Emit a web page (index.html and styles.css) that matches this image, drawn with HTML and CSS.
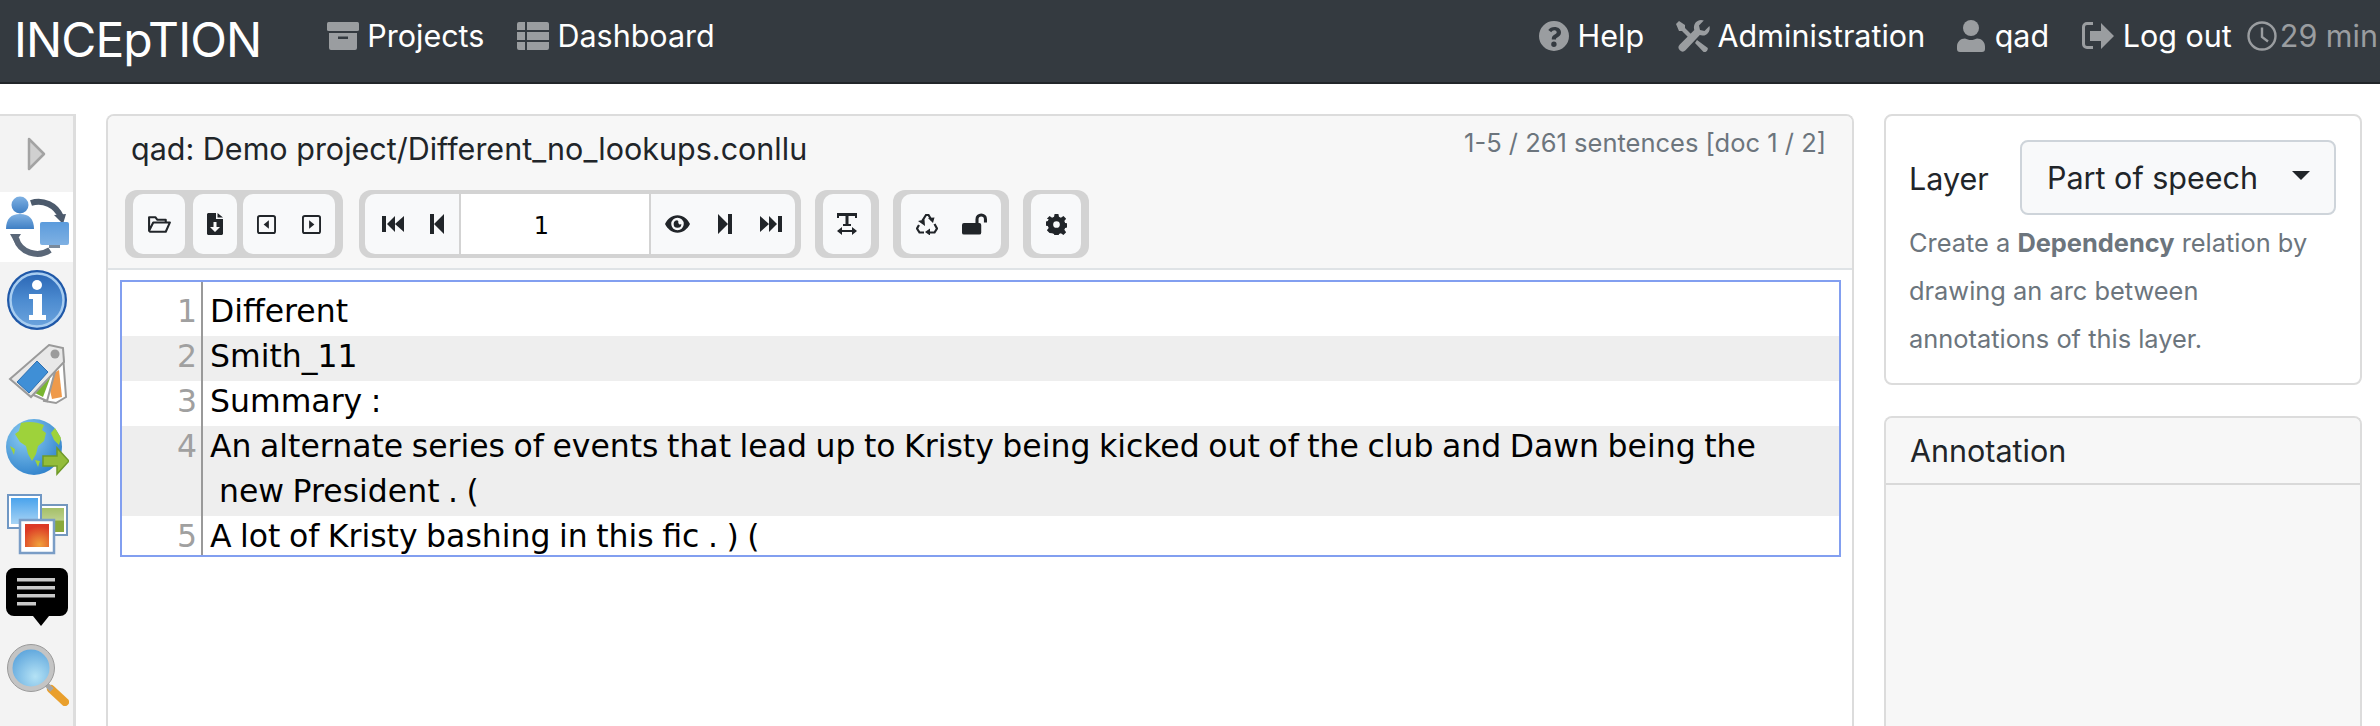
FILE: index.html
```html
<!DOCTYPE html>
<html lang="en">
<head>
<meta charset="utf-8">
<title>INCEpTION</title>
<link rel="stylesheet" href="styles.css">
</head>
<body>
<header class="navbar">
  <a class="brand">INCEpTION</a>
  <nav class="nav nav-left">
    <a class="nav-link"><svg class="nav-icon" viewBox="0 0 32 32"><rect x="0" y="2" width="32" height="9" rx="1.5"/><path d="M2 13h28v15a2 2 0 0 1-2 2H4a2 2 0 0 1-2-2zM11 16.500v2.500h10v-2.500z" fill-rule="evenodd"/></svg>Projects</a>
    <a class="nav-link"><svg class="nav-icon" viewBox="0 0 32 32"><path d="M0 4a2 2 0 0 1 2-2h6v8H0zM10 2h20a2 2 0 0 1 2 2v6H10zM0 12h8v8H0zM10 12h22v8H10zM0 22h8v8H2a2 2 0 0 1-2-2zM10 22h22v6a2 2 0 0 1-2 2H10z"/></svg>Dashboard</a>
  </nav>
  <nav class="nav nav-right">
    <a class="nav-link"><svg class="nav-icon" viewBox="0 0 32 32"><path fill-rule="evenodd" d="M16 1a15 15 0 1 0 0 30 15 15 0 0 0 0-30zM16.500 7c3.700 0 6.500 2.200 6.500 5.500 0 2.700-1.800 3.800-3.300 4.700-1 .6-1.700 1-1.700 1.800v.5h-4.200v-.9c0-2.300 1.400-3.300 2.900-4.200 1.200-.7 2-1.200 2-2.200 0-1.100-1.100-1.900-2.300-1.900-1.400 0-2.200.7-3.100 1.900l-3-2.300C11.700 8.200 13.700 7 16.500 7zM15.900 21.500a2.700 2.700 0 1 1 0 5.400 2.700 2.700 0 0 1 0-5.400z"/></svg>Help</a>
    <a class="nav-link"><svg class="nav-icon nav-icon-wide" viewBox="0 0 34 32"><path d="M3 1l6 4v3l9 9-3 3-9-9H3L0 4zM25 0c1 0 2 .2 2.800.6L23 5.500l1 4.500 4.500 1 4.900-4.900c1 3-.2 6.500-3 8.300-2 1.300-4.500 1.500-6.600.7L9.500 30.200a4 4 0 0 1-5.700-5.700L18.300 10c-1.500-4.500 1.500-10 6.700-10zM21 20l10.800 8a3.500 3.500 0 0 1-4.500 3.800L19 23z"/></svg>Administration</a>
    <a class="nav-link"><svg class="nav-icon nav-icon-user" viewBox="0 0 28 32"><circle cx="14" cy="8" r="8"/><path d="M8 18.500c1.800.9 3.800 1.500 6 1.500s4.200-.6 6-1.500c4.500 0 8 3.500 8 8V29a3 3 0 0 1-3 3H3a3 3 0 0 1-3-3v-2.500c0-4.500 3.500-8 8-8z"/></svg>qad</a>
    <a class="nav-link"><svg class="nav-icon nav-icon-wide" viewBox="0 0 34 32"><path d="M12 5H6a2 2 0 0 0-2 2v17a2 2 0 0 0 2 2h6v3H6a5 5 0 0 1-5-5V7a5 5 0 0 1 5-5h6z"/><path d="M20 3l13 13-13 13v-8H9V11h11z"/></svg>Log out</a>
    <span class="timer"><svg class="nav-icon timer-icon" viewBox="0 0 30 32"><circle cx="15" cy="16" r="13.500" fill="none" stroke="currentColor" stroke-width="2.400"/><path d="M15 7.500V17l6 4.500" fill="none" stroke="currentColor" stroke-width="2.400"/></svg>29 min</span>
  </nav>
</header>

<div class="workspace">
  <aside class="sidebar">
    <div class="toggle">
      <svg class="toggle-icon" viewBox="0 0 20 34"><path d="M2 2l15 15L2 32z" fill="#d0d0d0" stroke="#a3a3a3" stroke-width="2.500" stroke-linejoin="round"/></svg>
    </div>
    <div class="tab tab-active">
      <svg class="tab-icon" viewBox="0 0 64 64"><defs><linearGradient id="gb" x1="0" y1="0" x2="0" y2="1"><stop offset="0" stop-color="#7fb1e3"/><stop offset="1" stop-color="#3f7fc4"/></linearGradient><linearGradient id="gb2" x1="0" y1="0" x2="0" y2="1"><stop offset="0" stop-color="#5b9bdc"/><stop offset="1" stop-color="#7fb1e3"/></linearGradient></defs>
        <path d="M26 8c12-4 25 2 30 14" fill="none" stroke="#4c5a6c" stroke-width="6"/><path d="M49 20l12-1-3 10z" fill="#4c5a6c"/>
        <path d="M11 43c4 15 22 20 34 12" fill="none" stroke="#5a6778" stroke-width="6"/><path d="M10 48l-5-9 11 0z" fill="#5a6778"/>
        <circle cx="15" cy="10" r="8.500" fill="url(#gb)"/><path d="M1 34c0-10 5-15 14-15s14 5 14 15z" fill="url(#gb)"/>
        <rect x="35" y="27" width="29" height="23" rx="2" fill="url(#gb2)"/><rect x="44" y="50" width="11" height="3" fill="#7a8a9c"/></svg>
    </div>
    <div class="tab">
      <svg class="tab-icon" viewBox="0 0 64 64"><defs><linearGradient id="gi" x1="0" y1="0" x2="0" y2="1"><stop offset="0" stop-color="#2a66b5"/><stop offset=".5" stop-color="#4c8bd0"/><stop offset="1" stop-color="#6ba3dd"/></linearGradient></defs>
        <circle cx="32" cy="32" r="30" fill="#1f58a8"/><circle cx="32" cy="32" r="26.500" fill="url(#gi)" stroke="#a8cdf0" stroke-width="2.500"/>
        <circle cx="32" cy="17" r="5" fill="#fff"/><path d="M24 26h13v21h4v5H24v-5h4V31h-4z" fill="#fff"/></svg>
    </div>
    <div class="tab">
      <svg class="tab-icon" viewBox="0 0 64 64">
        <path d="M46 10l12 2 3 42-10 6-12-2z" fill="#fff" stroke="#9a9a9a" stroke-width="2"/><path d="M42 34l12-7 3 27-10 2z" fill="#ef9a4b"/>
        <path d="M44 10L54 14 42 58l-18-8z" fill="#fff" stroke="#9a9a9a" stroke-width="2"/><path d="M40 28l7 2-9 24-12-6z" fill="#79b531"/>
        <path d="M44 2l14 3 1 14-33 35L5 36z" fill="#e8e8e8" stroke="#9a9a9a" stroke-width="2"/><path d="M32 18l11 11-19 21-12-11z" fill="#3f8fd6" stroke="#2c6fb0" stroke-width="1"/><circle cx="50" cy="11" r="4.500" fill="#9b9b9b"/></svg>
    </div>
    <div class="tab">
      <svg class="tab-icon" viewBox="0 0 64 64"><defs><radialGradient id="gg" cx=".35" cy=".3" r=".8"><stop offset="0" stop-color="#8ccdf2"/><stop offset="1" stop-color="#2a7dc9"/></radialGradient></defs>
        <circle cx="29" cy="29" r="28" fill="url(#gg)"/>
        <path d="M16 5c8-2 16-1 23 2l-2 5 4 3-2 8-6 5-2 8-4 7-4-7-2-8-6-4-5-8 4-3zM50 10l6 10-2 7-5-5-3-7zM5 28l5 3-1 6zM30 42l5 1-2 6z" fill="#9ed23b"/>
        <path d="M38 38h14v-8l12 13-12 13v-8H38z" fill="#94bd3a" stroke="#6f9a28" stroke-width="1.500"/></svg>
    </div>
    <div class="tab">
      <svg class="tab-icon" viewBox="0 0 64 64"><defs><linearGradient id="gp1" x1="0" y1="0" x2="0" y2="1"><stop offset="0" stop-color="#4aa3ec"/><stop offset="1" stop-color="#a8d4f5"/></linearGradient><linearGradient id="gp2" x1="0" y1="0" x2="0" y2="1"><stop offset="0" stop-color="#a4bf68"/><stop offset=".5" stop-color="#bcd08c"/><stop offset=".55" stop-color="#8aa93c"/><stop offset="1" stop-color="#8aa93c"/></linearGradient><radialGradient id="gp3" cx=".6" cy=".9" r=".8"><stop offset="0" stop-color="#f0a23c"/><stop offset="1" stop-color="#dc3a26"/></radialGradient></defs>
        <rect x="32" y="12" width="30" height="30" fill="#fff" stroke="#7397bd" stroke-width="2"/><rect x="35" y="15" width="24" height="24" fill="url(#gp2)"/>
        <rect x="3" y="2" width="33" height="33" fill="#fff" stroke="#6f97c4" stroke-width="2"/><rect x="6" y="5" width="27" height="26" fill="url(#gp1)"/>
        <rect x="15" y="27" width="34" height="33" fill="#fff" stroke="#7a9dc6" stroke-width="2.500"/><rect x="20" y="31" width="24" height="23" fill="url(#gp3)"/></svg>
    </div>
    <div class="tab">
      <svg class="tab-icon" viewBox="0 0 64 64"><path d="M9 0h46a8 8 0 0 1 8 8v32a8 8 0 0 1-8 8H44l-8 10-8-10H9a8 8 0 0 1-8-8V8a8 8 0 0 1 8-8z" fill="#000"/><path d="M12 10h38v3.500H12zM12 18h38v3.500H12zM12 26h38v3.500H12zM12 34h19v3.500H12z" fill="#c9c9c9"/></svg>
    </div>
    <div class="tab">
      <svg class="tab-icon" viewBox="0 0 64 64"><defs><radialGradient id="gm" cx=".6" cy=".7" r=".8"><stop offset="0" stop-color="#b4e2f5"/><stop offset="1" stop-color="#4f9bd8"/></radialGradient></defs>
        <path d="M46 46l14 13" stroke="#e99f2c" stroke-width="8" stroke-linecap="round"/><path d="M40 40l7 7" stroke="#a5a5a5" stroke-width="5"/>
        <circle cx="26" cy="25" r="21" fill="url(#gm)" stroke="#c4c4c4" stroke-width="5"/><circle cx="26" cy="25" r="23.500" fill="none" stroke="#9a9a9a" stroke-width="1"/></svg>
    </div>
  </aside>

  <main class="card editor-card">
    <div class="card-header editor-header">
      <div class="title-row">
        <span class="doc-title">qad: Demo project/Different_no_lookups.conllu</span>
        <span class="doc-status">1-5 / 261 sentences [doc 1 / 2]</span>
      </div>
      <div class="toolbar">
        <div class="btn-group group-file">
          <button class="btn btn-open"><svg class="ico" viewBox="0 0 24 20"><path d="M2 16V3h6l2 2.500h8V8M2 16l4-8h16l-4 9H3z" fill="none" stroke="currentColor" stroke-width="2" stroke-linejoin="round"/></svg></button>
          <button class="btn btn-down"><svg class="ico ico-file" viewBox="0 0 16 22"><path fill-rule="evenodd" d="M0 1.500C0 .7.7 0 1.500 0H9v6h7v14.500c0 .8-.7 1.500-1.500 1.500h-13C.7 22 0 21.300 0 20.500zM6.500 9v5H3l5 5 5-5H9.500V9zM10.500 0L16 4.500h-5.500z"/></svg></button>
          <button class="btn btn-pair">
            <svg class="ico ico-sq" viewBox="0 0 20 20"><rect x="1" y="1" width="18" height="18" rx="2" fill="none" stroke="currentColor" stroke-width="2"/><path d="M12.500 5.500v9L7 10z"/></svg>
            <svg class="ico ico-sq" viewBox="0 0 20 20"><rect x="1" y="1" width="18" height="18" rx="2" fill="none" stroke="currentColor" stroke-width="2"/><path d="M7.500 5.500v9L13 10z"/></svg>
          </button>
        </div>
        <div class="btn-group">
          <div class="pager">
            <button class="btn btn-flat btn-first"><svg class="ico ico-ff" viewBox="0 0 22 16"><path d="M0 0h4v16H0zM5 8l8-8v16zM13 8l9-8v16z"/></svg><svg class="ico ico-step" viewBox="0 0 14 20"><path d="M0 0h4v20H0zM4 10L14 0v20z"/></svg></button>
            <input class="page-input" value="1" aria-label="Sentence">
            <button class="btn btn-flat btn-last"><svg class="ico ico-eye" viewBox="0 0 26 18"><path fill-rule="evenodd" d="M13 0C7 0 2.500 4 0 9c2.500 5 7 9 13 9s10.500-4 13-9c-2.500-5-7-9-13-9zM13 2.500a6.500 6.500 0 1 1 0 13 6.500 6.500 0 0 1 0-13zM13 5a4 4 0 1 0 4 4 2 2 0 0 1-3-2.500A2 2 0 0 1 13 5z"/></svg><svg class="ico ico-step" viewBox="0 0 14 20"><path d="M0 0l10 10L0 20zM10 0h4v20h-4z"/></svg><svg class="ico ico-ff" viewBox="0 0 22 16"><path d="M0 0l9 8-9 8zM9 0l8 8-8 8zM18 0h4v16h-4z"/></svg></button>
          </div>
        </div>
        <div class="btn-group">
          <button class="btn btn-width"><svg class="ico ico-tw" viewBox="0 0 20 22"><path d="M0 0h20v5h-2V3h-6.500v8H14v2H6v-2h2.500V3H2v2H0zM0 18l5-4v3h10v-3l5 4-5 4v-3H5v3z"/></svg></button>
        </div>
        <div class="btn-group">
          <button class="btn btn-tools"><svg class="ico ico-rc" viewBox="0 0 22 22"><g fill="none" stroke="currentColor" stroke-width="2.200"><path d="M6.500 7.500L10 2h2.500l3 5M3 12l-2 3.500 2.500 4H8M14 19.500h4.500L21 15.500l-2.500-4.500"/></g><path d="M12 5l6.500-.5L17 10zM2 8l6.500-1.500L9 13zM14 15.500v7l-5-3.500z"/></svg><svg class="ico ico-lock" viewBox="0 0 26 22"><path d="M2 10h12V6a6 6 0 0 1 12 0v3.500h-3.200V6a2.800 2.800 0 0 0-5.600 0v4H18a2 2 0 0 1 2 2v8a2 2 0 0 1-2 2H2a2 2 0 0 1-2-2v-8a2 2 0 0 1 2-2z"/></svg></button>
        </div>
        <div class="btn-group">
          <button class="btn btn-gear"><svg class="ico ico-cog" viewBox="0 0 22 22"><path fill-rule="evenodd" d="M9 0h4l.6 3 2 .9L18.300 2l2.800 2.900-1.900 2.500.9 2 3 .6v4l-3 .6-.9 2 1.900 2.500-2.800 2.900-2.700-1.900-2 .9-.6 3H9l-.6-3-2-.9L3.700 20l-2.800-2.900 1.900-2.500-.9-2-3-.6v-4l3-.6.9-2L.9 4.900 3.700 2l2.700 1.900 2-.9zM11 7.500a3.500 3.500 0 1 0 0 7 3.500 3.500 0 0 0 0-7z"/></svg></button>
        </div>
      </div>
    </div>
    <div class="card-body editor-body">
      <div class="document">
        <div class="row row-first"><div class="num">1</div><div class="sent">Different</div></div>
        <div class="row row-alt"><div class="num">2</div><div class="sent">Smith_11</div></div>
        <div class="row"><div class="num">3</div><div class="sent">Summary :</div></div>
        <div class="row row-alt row-double"><div class="num">4</div><div class="sent"><div>An alternate series of events that lead up to Kristy being kicked out of the club and Dawn being the</div><div class="wrapped">new President . (</div></div></div>
        <div class="row row-last"><div class="num">5</div><div class="sent">A lot of Kristy bashing in this fic . ) (</div></div>
      </div>
    </div>
  </main>

  <aside class="rail">
    <section class="card layer-card">
      <div class="layer-row">
        <label class="layer-label">Layer</label>
        <button class="layer-select"><span>Part of speech</span><i class="caret"></i></button>
      </div>
      <p class="layer-help">Create a <b>Dependency</b> relation by drawing an arc between annotations of this layer.</p>
    </section>
    <section class="card annotation-card">
      <div class="card-header annotation-header">Annotation</div>
    </section>
  </aside>
</div>
</body>
</html>
```
FILE: styles.css
```css
* { box-sizing: border-box; }
html, body { margin: 0; height: 726px; overflow: hidden; background: #fff; }
body { font-family: Inter, "Noto Sans", sans-serif; font-size: 30.5px; color: #212529; }

.navbar { height: 84px; background: #343a40; border-bottom: 2px solid #212529; display: flex; align-items: center; padding: 0 2px 0 14px; }
.brand { color: #fff; font-size: 48px; letter-spacing: -.9px; line-height: 56px; margin-right: 66px; margin-top: -2px; }
.nav { display: flex; align-items: center; }
.nav-left { gap: 33px; }
.nav-right { margin-left: auto; gap: 31.5px; }
.nav-link, .timer { display: flex; align-items: center; color: #fff; white-space: nowrap; line-height: 36px; margin-top: -10px; }
.nav-icon { width: 32px; height: 32px; margin-right: 8px; fill: #9a9da0; flex: none; }
.nav-icon-wide { width: 34px; }
.nav-icon-user { width: 28px; margin-right: 10px; }
.timer { color: #9a9da0; margin-left: -16.500px; }
.timer-icon { width: 30px; margin-right: 3px; color: #9a9da0; }

.workspace { display: grid; grid-template-columns: 76px 1748px 478px; column-gap: 30px; padding-top: 30px; height: 642px; }
.sidebar { background: #f3f3f3; border-top: 2px solid #ddd; border-right: 3px solid #ddd; display: flex; flex-direction: column; }
.toggle { height: 76px; display: flex; align-items: center; justify-content: center; }
.toggle-icon { width: 20px; height: 34px; }
.tab { height: 75px; flex: none; display: flex; align-items: center; justify-content: center; }
.tab-active { height: 70px; background: #fff; }
.tab-icon { width: 64px; height: 64px; filter: blur(.5px); }

.card { border: 2px solid #dcdcdc; border-radius: 8px; background: #fff; overflow: hidden; }
.card-header { background: #f7f7f7; }
.editor-card { display: flex; flex-direction: column; border-bottom: 0; border-radius: 8px 8px 0 0; }
.editor-header { height: 154px; border-bottom: 2px solid #dfe3e6; padding: 0 16px 0 17px; }
.title-row { display: flex; justify-content: space-between; height: 74px; }
.doc-title { line-height: 36px; margin: 15px 0 0 6px; }
.doc-status { font-size: 25.5px; color: #6c757d; line-height: 30px; margin-top: 12px; margin-right: 10px; }
.toolbar { display: flex; gap: 14px; }
.btn-group { display: flex; gap: 8px; background: #d3d3d3; border-radius: 12px; padding: 4px 8px; height: 68px; }
.group-file { margin-right: 2px; }
.btn { border: 0; padding: 0; margin: 0; background: #f8f9fa; border-radius: 10px; height: 60px; display: flex; align-items: center; justify-content: center; color: #212529; }
.ico { fill: #212529; color: #212529; flex: none; display: block; }
.btn-open { width: 52px; }
.btn-open .ico { width: 25px; height: 21px; }
.btn-down { width: 44px; margin-right: -2px; }
.ico-file { width: 16px; height: 22px; }
.btn-pair { width: 92px; gap: 26px; }
.ico-sq { width: 19px; height: 19px; }
.pager { display: flex; gap: 2px; border-radius: 10px; overflow: hidden; margin: 0 -2px; }
.btn-flat { border-radius: 0; }
.btn-first { width: 94px; gap: 26px; padding-left: 1px; }
.btn-last { width: 144px; gap: 28px; }
.ico-ff { width: 22px; height: 16px; }
.ico-step { width: 14px; height: 20px; }
.ico-eye { width: 25px; height: 18px; }
.page-input { width: 188px; height: 60px; border: 0; background: #fff; text-align: center; font: 24px "DejaVu Sans", sans-serif; color: #000; outline: 0; padding: 3px 27px 0 0; }
.btn-width { width: 48px; }
.ico-tw { width: 20px; height: 22px; }
.btn-tools { width: 100px; gap: 24px; }
.ico-rc { width: 22px; height: 22px; }
.ico-lock { width: 25px; height: 22px; }
.btn-gear { width: 50px; }
.ico-cog { width: 21px; height: 21px; }

.editor-body { padding: 10px 11px 0 12px; }
.document { border: 2px solid #829ff0; height: 277px; font-family: "DejaVu Sans", sans-serif; font-size: 31.5px; word-spacing: -1.5px; line-height: 45px; color: #000; overflow: hidden; }
.row { display: flex; height: 45px; }
.row-first { height: 54px; }
.row-double { height: 90px; }
.row-alt { background: #eee; }
.row-last { height: 39px; }
.num { flex: none; width: 81px; padding-right: 4px; line-height: 41px; text-align: right; color: #a0a0a0; border-right: 2px solid #999; }
.sent { padding-left: 7px; white-space: nowrap; margin-top: -2px; }
.row-first .num { padding-top: 9px; }
.row-first .sent { margin-top: 7px; }
.wrapped { padding-left: 9px; }

.rail { display: flex; flex-direction: column; gap: 31px; }
.layer-card { height: 271px; padding: 24px 24px 0 23px; flex: none; }
.layer-row { display: flex; align-items: center; }
.layer-label { line-height: 36px; margin-top: 3px; }
.layer-select { width: 316px; height: 75px; margin-left: auto; background: #f8f9fa; border: 2px solid #ced4da; border-radius: 8px; font: 30.5px Inter, sans-serif; color: #212529; display: flex; align-items: center; justify-content: space-between; padding: 0 24px 0 25px; }
.caret { width: 0; height: 0; border-left: 9px solid transparent; border-right: 9px solid transparent; border-top: 9px solid #212529; margin-bottom: 4px; }
.layer-help { margin: 4px 0 0; font-size: 25.4px; line-height: 48px; color: #6c757d; }
.layer-help b { font-weight: 700; }
.annotation-card { flex: 1; background: #f7f7f7; border-bottom: 0; border-radius: 8px 8px 0 0; }
.annotation-header { height: 67px; line-height: 66px; padding-left: 24px; border-bottom: 2px solid #d9d9d9; }
```
